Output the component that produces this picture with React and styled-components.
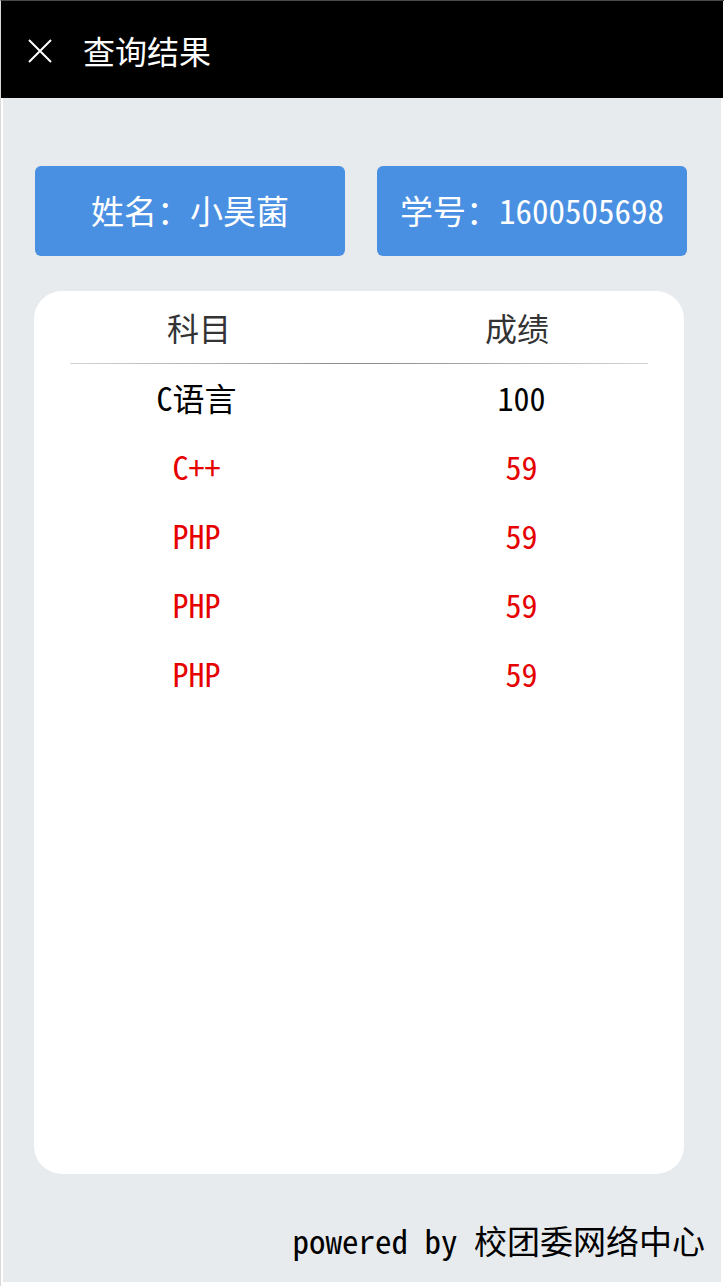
import React from 'react'
import styled, { createGlobalStyle } from 'styled-components'

const GlobalStyle = createGlobalStyle`
  html, body {
    margin: 0;
    padding: 0;
    background: #ffffff;
  }
  body {
    font-family: "Noto Sans Mono CJK SC", "Noto Sans CJK SC", "DejaVu Sans Mono", monospace;
  }
`

const scores = [
  { subject: 'C语言', score: 100 },
  { subject: 'C++', score: 59 },
  { subject: 'PHP', score: 59 },
  { subject: 'PHP', score: 59 },
  { subject: 'PHP', score: 59 },
]

function CloseIcon() {
  return (
    <svg width="26" height="26" viewBox="0 0 26 26" fill="none">
      <path d="M2 2L24 24M24 2L2 24" stroke="#fff" strokeWidth="2" />
    </svg>
  )
}

export default function App() {
  return (
    <Screen>
      <GlobalStyle />
      <Header>
        <IconButton>
          <CloseIcon />
        </IconButton>
        <Title>查询结果</Title>
      </Header>

      <Main>
        <InfoRow>
          <InfoButton>姓名：小昊菌</InfoButton>
          <InfoButton>学号：1600505698</InfoButton>
        </InfoRow>

        <Card>
          <TableHead>
            <Cell>科目</Cell>
            <Cell>成绩</Cell>
          </TableHead>
          <Divider />
          <Rows>
            {scores.map((row, i) => (
              <Row key={i} $fail={row.score < 60}>
                <Cell>{row.subject}</Cell>
                <Cell>{row.score}</Cell>
              </Row>
            ))}
          </Rows>
        </Card>

        <Footer>powered by 校团委网络中心</Footer>
      </Main>
    </Screen>
  )
}

const Screen = styled.div`
  width: 724px;
  height: 1286px;
  box-sizing: border-box;
  border-top: 1px solid #4a4a4a;
  border-left: 1px solid #d8d8d8;
  display: flex;
  flex-direction: column;
  overflow: hidden;
`

const Header = styled.header`
  height: 97px;
  width: 722px;
  background: #000;
  display: flex;
  align-items: center;
  padding-left: 26px;
  box-sizing: border-box;
  flex-shrink: 0;
`

const IconButton = styled.div`
  width: 26px;
  height: 26px;
  display: flex;
  margin-right: 30px;
  margin-top: 2px;
`

const Title = styled.h1`
  margin: 0;
  color: #fff;
  font-family: "Noto Sans CJK SC", sans-serif;
  font-weight: 400;
  font-size: 32px;
  line-height: 1;
`

const Main = styled.main`
  width: 718px;
  margin-left: 2px;
  height: 1184px;
  background: #e8ebee;
  display: flex;
  flex-direction: column;
  padding: 68px 0 0 0;
  box-sizing: border-box;
`

const InfoRow = styled.div`
  display: flex;
  gap: 32px;
  padding: 0 34px 0 32px;
`

const InfoButton = styled.div`
  flex: 1;
  height: 90px;
  border-radius: 6px;
  background: #4a90e2;
  color: #fff;
  font-size: 33px;
  display: flex;
  align-items: center;
  justify-content: center;
  padding-bottom: 2px;
  box-sizing: border-box;
`

const Card = styled.section`
  margin: 35px 0 0 31px;
  width: 650px;
  height: 883px;
  background: #fff;
  border-radius: 28px;
  box-sizing: border-box;
`

const TableHead = styled.div`
  display: grid;
  grid-template-columns: 1fr 1fr;
  height: 72px;
  padding: 0 8px 0 6px;
  align-items: center;
  color: #333;
  font-family: "Noto Sans CJK SC", sans-serif;
  font-size: 32px;
`

const Cell = styled.div`
  text-align: center;
  line-height: 1;
`

const Divider = styled.div`
  height: 1px;
  margin: 0 36px;
  background: linear-gradient(to right, #d4d4d4, #8a8a8a 50%, #d4d4d4);
`

const Rows = styled.div`
  margin-top: -2px;
`

const Row = styled.div`
  display: grid;
  grid-template-columns: 1fr 1fr;
  height: 69px;
  align-items: center;
  font-size: 32px;
  color: ${(p) => (p.$fail ? '#e60000' : '#000')};
`

const Footer = styled.footer`
  margin-top: auto;
  height: 108px;
  display: flex;
  align-items: center;
  justify-content: flex-end;
  padding: 24px 16px 0 0;
  box-sizing: border-box;
  font-size: 33px;
  color: #000;
`
